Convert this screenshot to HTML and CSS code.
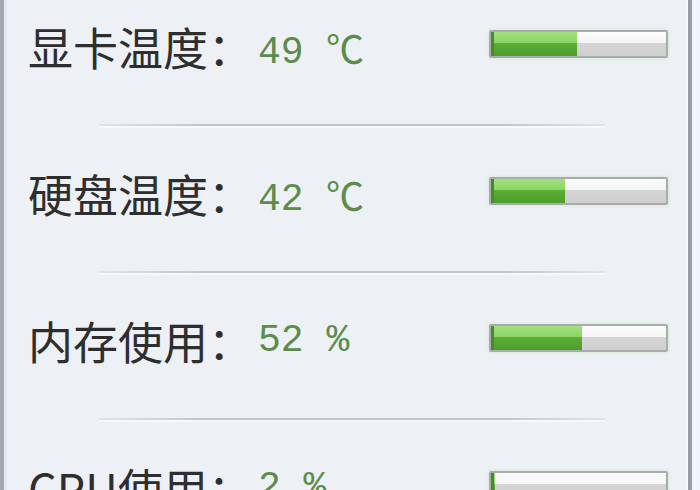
FILE: index.html
```html
<!DOCTYPE html>
<html lang="zh-CN">
  <head>
    <meta charset="UTF-8" />
    <meta name="viewport" content="width=device-width, initial-scale=1.0" />
    <title>硬件监控</title>
    <link rel="stylesheet" href="styles.css">
  </head>
  <body>
    <div class="panel">
      <div class="item">
        <span class="label">显卡温度：</span>
        <span class="value">49 ℃</span>
        <div class="bar"><div class="fill" style="width: 49%"></div></div>
      </div>
      <div class="divider"></div>
      <div class="item">
        <span class="label">硬盘温度：</span>
        <span class="value">42 ℃</span>
        <div class="bar"><div class="fill" style="width: 42%"></div></div>
      </div>
      <div class="divider"></div>
      <div class="item">
        <span class="label">内存使用：</span>
        <span class="value">52 %</span>
        <div class="bar"><div class="fill" style="width: 52%"></div></div>
      </div>
      <div class="divider"></div>
      <div class="item">
        <span class="label">CPU使用：</span>
        <span class="value">2 %</span>
        <div class="bar"><div class="fill" style="width: 2%"></div></div>
      </div>
    </div>
  </body>
</html>
```

FILE: styles.css
```css
body {
  margin: 0;
  height: 490px;
  background-color: #f1f5fa;
  font-family: "Noto Sans CJK SC", sans-serif;
  overflow: hidden;
}
.panel {
  width: 640px;
  height: 489px;
  padding: 1px 20px 0 24px;
  background-color: #edf0f4;
  border-left: 4px solid #a3a8af;
  border-right: 4px solid #979da5;
  box-shadow: inset 3px 0 0 #e4e8ee, inset -2px 0 0 #f7f9fb;
  overflow: hidden;
}
.item {
  height: 90px;
  display: flex;
  align-items: center;
}
.label {
  width: 230px;
  font-size: 45px;
  color: #2e2e2e;
  white-space: nowrap;
}
.value {
  font-family: "Liberation Mono", "DejaVu Sans Mono", monospace;
  font-size: 38px;
  color: #5c8c4c;
  white-space: nowrap;
}
.bar {
  margin-left: auto;
  margin-bottom: 4px;
  width: 175px;
  height: 24px;
  border: 2px solid #a9abad;
  border-radius: 2px;
  background: linear-gradient(#fcfcfc 0, #f4f4f4 45%, #d5d5d5 45%, #cfcfcf 100%);
  box-shadow: 0 0 3px rgba(160, 220, 140, 0.5);
  overflow: hidden;
}
.fill {
  height: 100%;
  background: linear-gradient(#a2e07f 0, #8ad562 45%, #5bae36 45%, #4e9d2c 100%);
  border-left: 3px solid #4a8a2a;
  box-sizing: border-box;
}
.divider {
  margin: 33px 63px 22px 71px;
  height: 2px;
  background: linear-gradient(to right, rgba(195, 199, 204, 0.3), #c2c6cb 20%, #c2c6cb 80%, rgba(195, 199, 204, 0.3));
  box-shadow: 0 2px 0 #f8f9fb;
}
```
